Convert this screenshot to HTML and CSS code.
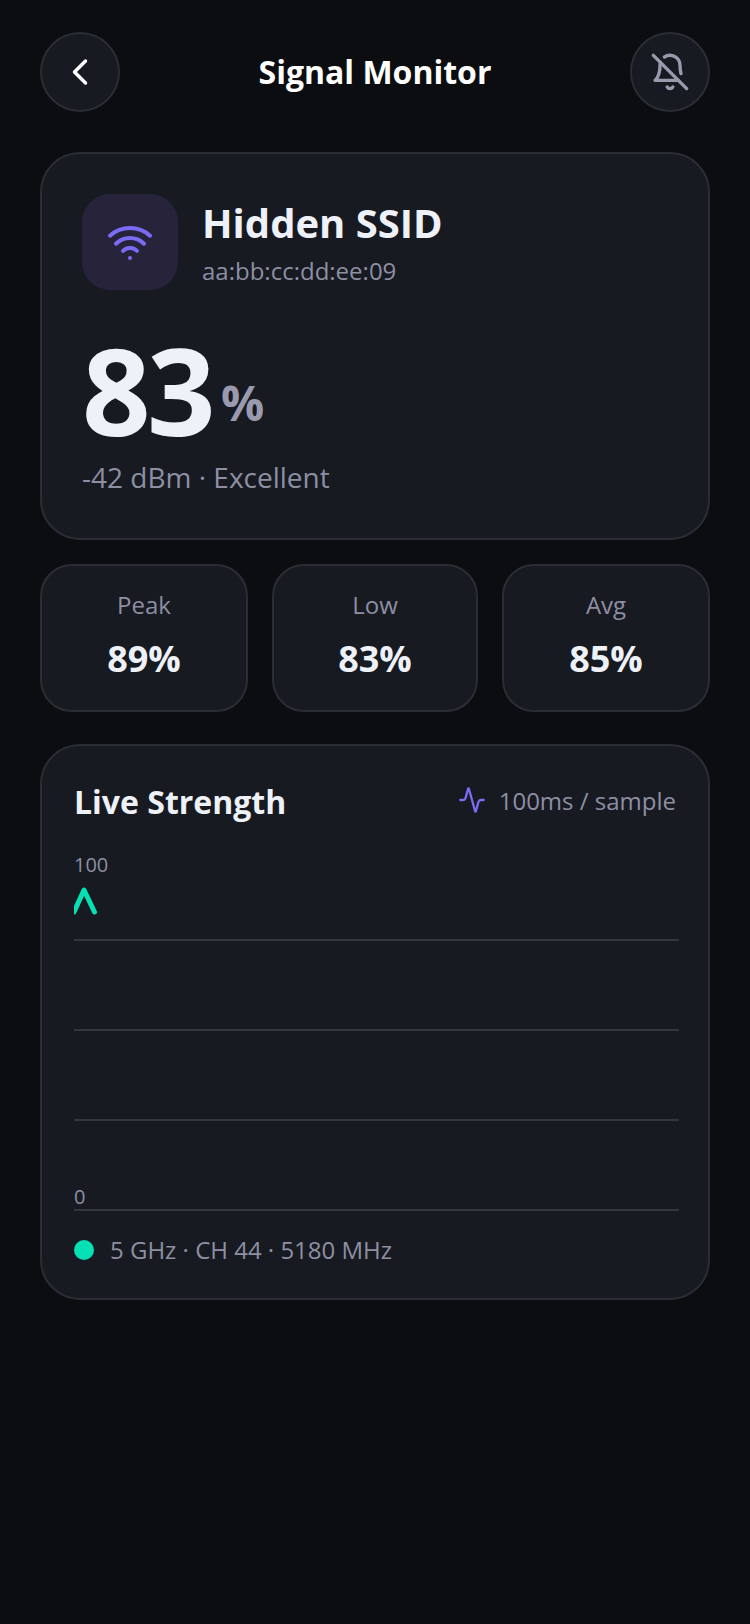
FILE: index.html
```html
<!DOCTYPE html>
<html lang="en">
<head>
  <meta charset="UTF-8" />
  <meta name="viewport" content="width=device-width, initial-scale=1.0"/>
  <title>Signal Monitor</title>
  <link rel="stylesheet" href="styles.css">
</head>
<body>

  <header class="topbar">
    <button class="round-btn">
      <svg class="icon-back" viewBox="0 0 24 24"><path d="m15 18-6-6 6-6"/></svg>
    </button>
    <h1>Signal Monitor</h1>
    <button class="round-btn">
      <svg class="icon-bell" viewBox="0 0 24 24">
        <path d="M8.7 3A6 6 0 0 1 18 8a21.3 21.3 0 0 0 .6 5"/>
        <path d="M17 17H3s3-2 3-9a4.67 4.67 0 0 1 .3-1.7"/>
        <path d="M10.3 21a1.94 1.94 0 0 0 3.4 0"/>
        <path d="m2 2 20 20"/>
      </svg>
    </button>
  </header>

  <section class="card network">
    <div class="network-head">
      <div class="wifi-tile">
        <svg class="icon-wifi" viewBox="0 0 24 24">
          <path d="M12 20h.01"/>
          <path d="M2 8.82a15 15 0 0 1 20 0"/>
          <path d="M5 12.859a10 10 0 0 1 14 0"/>
          <path d="M8.5 16.429a5 5 0 0 1 7 0"/>
        </svg>
      </div>
      <div>
        <h2>Hidden SSID</h2>
        <p class="mac">aa:bb:cc:dd:ee:09</p>
      </div>
    </div>
    <div class="reading"><span class="reading-num">83</span><span class="reading-unit">%</span></div>
    <p class="reading-note">-42 dBm · Excellent</p>
  </section>

  <section class="stats">
    <div class="stat"><span class="stat-label">Peak</span><strong>89%</strong></div>
    <div class="stat"><span class="stat-label">Low</span><strong>83%</strong></div>
    <div class="stat"><span class="stat-label">Avg</span><strong>85%</strong></div>
  </section>

  <section class="card live">
    <div class="live-head">
      <h3>Live Strength</h3>
      <div class="rate">
        <svg class="icon-activity" viewBox="0 0 24 24"><path d="M22 12h-2.48a2 2 0 0 0-1.93 1.46l-2.35 8.36a.25.25 0 0 1-.48 0L9.24 2.18a.25.25 0 0 0-.48 0l-2.35 8.36A2 2 0 0 1 4.49 12H2"/></svg>
        <span>100ms / sample</span>
      </div>
    </div>

    <!-- chart: 360 high, 100% at y=0 -->
    <svg class="chart" viewBox="0 0 605 362">
      <line x1="0" y1="89" x2="605" y2="89"/>
      <line x1="0" y1="179" x2="605" y2="179"/>
      <line x1="0" y1="269" x2="605" y2="269"/>
      <line x1="0" y1="359" x2="605" y2="359"/>
      <text x="0" y="21">100</text>
      <text x="0" y="353">0</text>
      <polyline points="0,61 10,39 20.5,61"/>
    </svg>

    <div class="legend">
      <span class="dot"></span>
      <span>5 GHz · CH 44 · 5180 MHz</span>
    </div>
  </section>

</body>
</html>
```

FILE: styles.css
```css
body {
  font-family: 'Open Sans', sans-serif;
  margin: 0;
  padding: 32px 40px;
  min-height: 1560px;
  background-color: #0c0d11;
  color: #eef1f8;
}

h1, h2, h3, p {
  margin: 0;
}

svg {
  display: block;
  fill: none;
  stroke-linecap: round;
  stroke-linejoin: round;
}

/* Top bar */
.topbar {
  display: flex;
  align-items: center;
  justify-content: space-between;
  height: 80px;
  margin-bottom: 40px;
}

.topbar h1 {
  font-size: 32px;
  font-weight: 700;
  color: #fff;
  padding-bottom: 2px;
}

.round-btn {
  display: flex;
  align-items: center;
  justify-content: center;
  width: 80px;
  height: 80px;
  padding: 0;
  background-color: #171a21;
  border: 2px solid #2a2d35;
  border-radius: 50%;
}

.icon-back {
  width: 44px;
  height: 44px;
  stroke: #fff;
  stroke-width: 1.9;
}

.icon-bell {
  width: 40px;
  height: 40px;
  stroke: #9a9aae;
  stroke-width: 2;
}

/* Cards */
.card {
  background-color: #171a21;
  border: 2px solid #2a2d35;
  border-radius: 40px;
}

.network {
  padding: 40px 40px 41px;
  margin-bottom: 24px;
}

.network-head {
  display: flex;
  align-items: center;
  gap: 24px;
}

.wifi-tile {
  display: flex;
  align-items: center;
  justify-content: center;
  width: 96px;
  height: 96px;
  background-color: #26233a;
  border-radius: 28px;
}

.icon-wifi {
  width: 48px;
  height: 48px;
  stroke: #7c6cf5;
  stroke-width: 2;
}

.network h2 {
  font-size: 40px;
  font-weight: 700;
  line-height: 52px;
}

.mac {
  font-size: 24px;
  line-height: 32px;
  margin-top: 6px;
  color: #8e8fa3;
}

.reading {
  display: flex;
  align-items: flex-start;
  gap: 9px;
  margin-top: 34px;
  height: 132px;
  line-height: 132px;
}

.reading-num {
  font-size: 120px;
  font-weight: 700;
  letter-spacing: -0.03em;
}

.reading-unit {
  font-size: 48px;
  font-weight: 700;
  line-height: 48px;
  margin-top: 55px;
  color: #9a9aae;
}

.reading-note {
  font-size: 28px;
  line-height: 40px;
  margin-top: 1px;
  color: #8e8fa3;
}

/* Stat boxes */
.stats {
  display: grid;
  grid-template-columns: 208px 206px 208px;
  gap: 24px;
  margin-bottom: 32px;
}

.stat {
  display: flex;
  flex-direction: column;
  align-items: center;
  gap: 13px;
  height: 148px;
  box-sizing: border-box;
  padding-top: 23px;
  background-color: #171a21;
  border: 2px solid #2a2d35;
  border-radius: 32px;
}

.stat-label {
  font-size: 24px;
  line-height: 32px;
  color: #8e8fa3;
}

.stat strong {
  font-size: 36px;
  line-height: 50px;
  font-weight: 700;
}

/* Live chart */
.live {
  padding: 32px 32px 31px;
}

.live-head {
  display: flex;
  align-items: center;
  justify-content: space-between;
  height: 46px;
}

.live-head h3 {
  font-size: 32px;
  font-weight: 700;
}

.rate {
  display: flex;
  align-items: center;
  gap: 13px;
  padding-bottom: 2px;
  font-size: 24px;
  color: #8e8fa3;
}

.icon-activity {
  width: 28px;
  height: 28px;
  stroke: #7c6cf5;
  stroke-width: 2;
}

.chart {
  width: 605px;
  height: 362px;
  margin-top: 27px;
}

.chart line {
  stroke: #33363e;
  stroke-width: 2;
}

.chart text {
  font-size: 20px;
  fill: #8e8fa3;
  stroke: none;
}

.chart polyline {
  stroke: #06e0b4;
  stroke-width: 5;
}

.legend {
  display: flex;
  align-items: center;
  gap: 16px;
  margin-top: 20px;
  font-size: 24px;
  line-height: 34px;
  color: #8e8fa3;
}

.dot {
  width: 20px;
  height: 20px;
  border-radius: 50%;
  background-color: #06e0b4;
}
```
